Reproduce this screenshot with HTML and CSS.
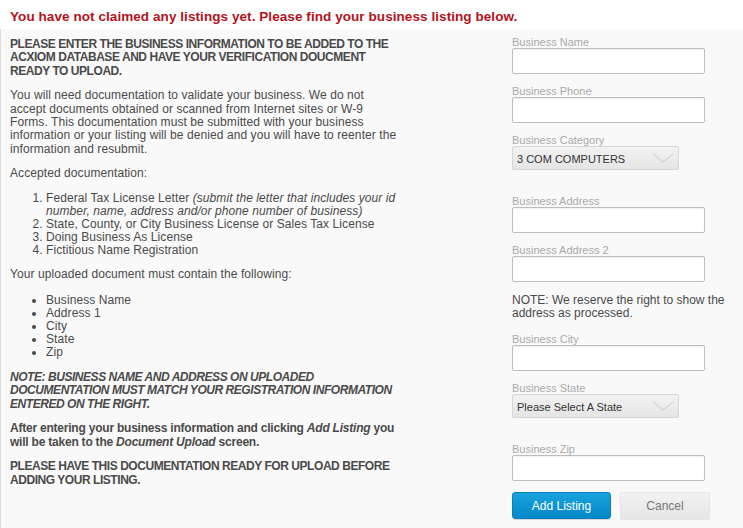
FILE: index.html
```html
<!DOCTYPE html>
<html>
<head>
<meta charset="utf-8">
<link rel="stylesheet" href="styles.css">
</head>
<body>
<div class="alert">You have not claimed any listings yet. Please find your business listing below.</div>
<div class="panel">
  <div class="info">
    <p class="strong">PLEASE ENTER THE BUSINESS INFORMATION TO BE ADDED TO THE ACXIOM DATABASE AND HAVE YOUR VERIFICATION DOUCMENT READY TO UPLOAD.</p>
    <p>You will need documentation to validate your business. We do not accept documents obtained or scanned from Internet sites or W-9 Forms. This documentation must be submitted with your business information or your listing will be denied and you will have to reenter the information and resubmit.</p>
    <p class="lead">Accepted documentation:</p>
    <ol>
      <li>Federal Tax License Letter <em>(submit the letter that includes your id number, name, address and/or phone number of business)</em></li>
      <li>State, County, or City Business License or Sales Tax License</li>
      <li>Doing Business As License</li>
      <li>Fictitious Name Registration</li>
    </ol>
    <p class="lead">Your uploaded document must contain the following:</p>
    <ul>
      <li>Business Name</li>
      <li>Address 1</li>
      <li>City</li>
      <li>State</li>
      <li>Zip</li>
    </ul>
    <p class="strong"><em>NOTE: BUSINESS NAME AND ADDRESS ON UPLOADED DOCUMENTATION MUST MATCH YOUR REGISTRATION INFORMATION ENTERED ON THE RIGHT.</em></p>
    <p class="strong mixed">After entering your business information and clicking <em>Add Listing</em> you will be taken to the <em>Document Upload</em> screen.</p>
    <p class="strong">PLEASE HAVE THIS DOCUMENTATION READY FOR UPLOAD BEFORE ADDING YOUR LISTING.</p>
  </div>
  <form class="form">
    <label class="field">
      <span class="label">Business Name</span>
      <input class="input" type="text">
    </label>
    <label class="field">
      <span class="label">Business Phone</span>
      <input class="input" type="text">
    </label>
    <label class="field field-select">
      <span class="label">Business Category</span>
      <span class="select-wrap">
        <select class="select"><option>3 COM COMPUTERS</option></select>
        <svg class="chevron" width="22" height="10" viewBox="0 0 22 10"><polyline points="1,1 11,9 21,1" fill="none" stroke="#c8c8c8" stroke-width="1"/></svg>
      </span>
    </label>
    <label class="field">
      <span class="label">Business Address</span>
      <input class="input" type="text">
    </label>
    <label class="field">
      <span class="label">Business Address 2</span>
      <input class="input" type="text">
    </label>
    <p class="note">NOTE: We reserve the right to show the address as processed.</p>
    <label class="field">
      <span class="label">Business City</span>
      <input class="input" type="text">
    </label>
    <label class="field field-select">
      <span class="label">Business State</span>
      <span class="select-wrap">
        <select class="select"><option>Please Select A State</option></select>
        <svg class="chevron" width="22" height="10" viewBox="0 0 22 10"><polyline points="1,1 11,9 21,1" fill="none" stroke="#c8c8c8" stroke-width="1"/></svg>
      </span>
    </label>
    <label class="field">
      <span class="label">Business Zip</span>
      <input class="input" type="text">
    </label>
    <div class="actions">
      <button type="button" class="btn btn-primary">Add Listing</button>
      <button type="button" class="btn btn-secondary">Cancel</button>
    </div>
  </form>
</div>
</body>
</html>
```

FILE: styles.css
```css
html, body {
  margin: 0;
  padding: 0;
  background: #ffffff;
  font-family: "Liberation Sans", Arial, sans-serif;
  color: #4a4a4a;
  font-size: 12px;
}

.alert {
  padding: 9px 10px 0 10px;
  color: #b3121c;
  font-weight: bold;
  font-size: 13.5px;
  letter-spacing: 0.07px;
  line-height: 16px;
}

.panel {
  margin-top: 4px;
  background: #f9f9f9;
  border-left: 1px solid #dcdcdc;
  display: grid;
  grid-template-columns: 401px 225px;
  column-gap: 110px;
  min-height: 499px;
  box-sizing: border-box;
}

.info {
  padding: 9px 0 0 9px;
  letter-spacing: 0.08px;
}

.info p {
  margin: 0 0 11px 0;
  line-height: 13.4px;
}

.info .strong {
  font-weight: bold;
  letter-spacing: -0.45px;
}

.info .mixed {
  letter-spacing: -0.22px;
}

.info ol, .info ul {
  margin: 0 0 11px 0;
  padding-left: 36px;
  line-height: 13px;
}

.info ul {
  margin-top: 13px;
  margin-bottom: 12px;
}

.info .lead {
  margin-bottom: 11px;
}

.form {
  padding-top: 7px;
  display: flex;
  flex-direction: column;
}

.field {
  display: flex;
  flex-direction: column;
  margin-bottom: 11px;
}

.field-select {
  margin-bottom: 25px;
}

.label {
  display: block;
  font-size: 11px;
  line-height: 12px;
  color: #a9a9a9;
}

.input {
  box-sizing: border-box;
  width: 193px;
  height: 26px;
  margin: 0;
  border: 1px solid #bdbdbd;
  border-radius: 2px;
  background: #ffffff;
  box-shadow: inset 0 1px 1px rgba(0,0,0,0.06);
}

.select-wrap {
  position: relative;
  display: block;
  width: 167px;
  height: 24px;
}

.select {
  -webkit-appearance: none;
  appearance: none;
  box-sizing: border-box;
  width: 167px;
  height: 24px;
  margin: 0;
  padding: 2px 0 0 4px;
  border: 1px solid #d6d6d6;
  border-radius: 2px;
  background: linear-gradient(#f2f2f2, #e5e5e5);
  font-family: "Liberation Sans", Arial, sans-serif;
  font-size: 11px;
  color: #333333;
}

.chevron {
  position: absolute;
  right: 5px;
  top: 7px;
}

.note {
  margin: 1px 0 13px 0;
  font-size: 12px;
  line-height: 13px;
  color: #4a4a4a;
}

.actions {
  display: flex;
  gap: 9px;
  margin-top: 0;
}

.btn {
  box-sizing: border-box;
  height: 27px;
  margin: 0;
  border-radius: 3px;
  font-family: "Liberation Sans", Arial, sans-serif;
  font-size: 12px;
}

.btn-primary {
  width: 99px;
  border: 1px solid #0a7fbc;
  background: linear-gradient(#17a3de, #0787c7);
  color: #ffffff;
  box-shadow: 0 1px 1px rgba(0,0,0,0.15);
}

.btn-secondary {
  width: 90px;
  border: 1px solid #e6e6e6;
  background: linear-gradient(#f2f2f2, #e6e6e6);
  color: #777777;
  border-radius: 1px;
  box-shadow: 0 1px 1px rgba(0,0,0,0.08);
}
```
